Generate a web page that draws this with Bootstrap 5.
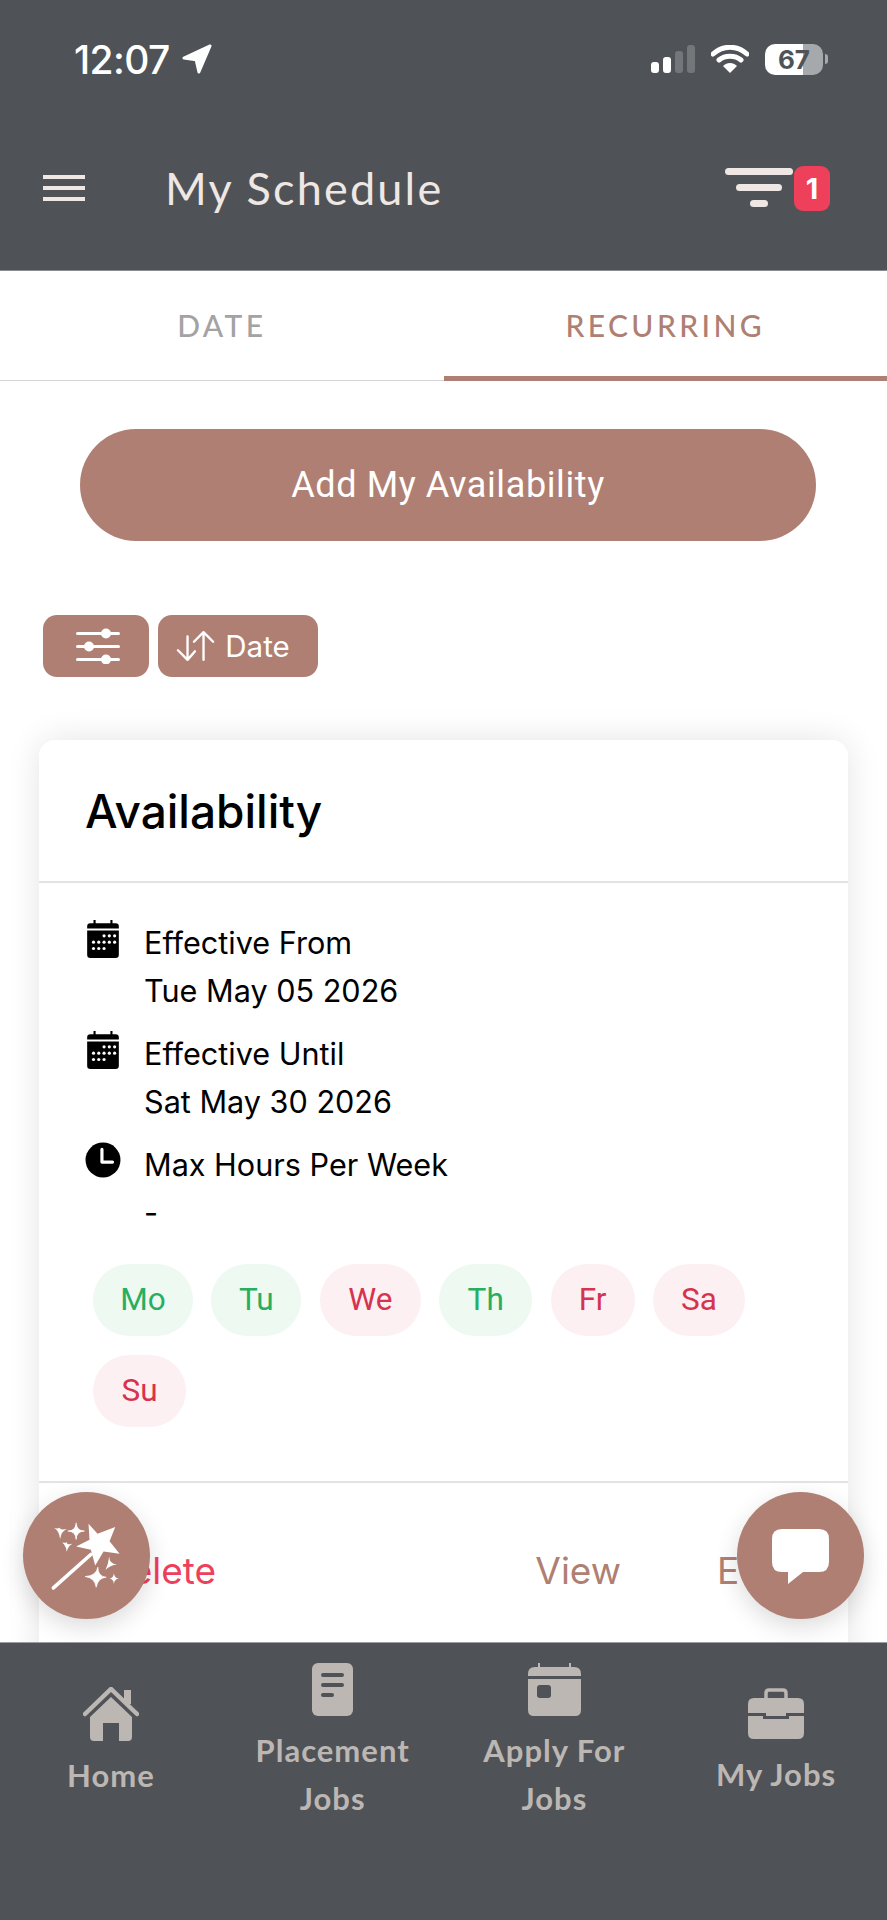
<!DOCTYPE html>
<html lang="en">
<head>
  <meta charset="UTF-8">
  <title>My Schedule</title>
  <meta name="viewport" content="width=device-width, initial-scale=1">
  <link href="https://cdn.jsdelivr.net/npm/bootstrap@5.3.3/dist/css/bootstrap.min.css" rel="stylesheet">
  <style>
    body { background: #fff; font-family: Inter, "Liberation Sans", sans-serif; }
    .app-screen { width: 887px; height: 1920px; position: relative; overflow: hidden; }
    .top-area { background: #4f5357; height: 271px; border-bottom: 1px solid #8a8d90; flex: none; }
    .status-row { height: 118px; padding: 0 59px 0 74px; color: #fff; }
    .status-time { font-size: 39px; font-weight: 500; letter-spacing: -.6px; line-height: 1; margin-right: 4px; }
    .batt-box { width: 58px; height: 31px; border-radius: 10px; overflow: hidden; background: linear-gradient(90deg, #fff 66%, #a5a9ab 66%); color: #4f5357; font: 700 26px/31px Inter, sans-serif; text-align: center; }
    .batt-nub { width: 3px; height: 10px; margin-left: 2px; border-radius: 0 3px 3px 0; background: #a5a9ab; }
    .app-row { height: 152px; padding: 0 57px 12px 43px; }
    .app-title { font-family: Lato, sans-serif; font-size: 45px; color: #efe7e3; margin-left: 80px; letter-spacing: 2.2px; line-height: 1; }
    .count-pill { width: 36px; height: 45px; border-radius: 9px; background: #ee3f5b; color: #fff; font: 700 29px/45px Inter, sans-serif; text-align: center; }
    .tab-row { height: 110px; border-bottom: 1px solid #d5d5d9; flex: none; }
    .tab-link { flex: 1; text-align: center; line-height: 108px; height: 110px; font-family: Lato, sans-serif; font-weight: 500; font-size: 30px; letter-spacing: 3.4px; color: #a3a3a3; }
    .tab-link.is-on { color: #b07f73; border-bottom: 5px solid #b07f73; }
    .main-area { flex: 1; min-height: 0; overflow: hidden; background: #fff; }
    .add-btn { display: block; width: 736px; height: 112px; margin: 48px auto 0 80px; border-radius: 56px; background: #b07f73; border: 0; color: #fff; font: 400 36px Roboto, sans-serif; letter-spacing: .6px; }
    .tool-row { margin: 74px 0 0 43px; gap: 9px; }
    .tool-btn { height: 62px; border-radius: 14px; background: #b07f73; border: 0; color: #fff; font: 400 29.5px Inter, sans-serif; padding: 0; }
    .sort-icon { margin-right: 10px; }
    .sort-text { margin-right: 11px; }
    .avail-card { margin: 63px 39px 0; border: 0; border-radius: 16px; box-shadow: 0 0 34px rgba(0,0,0,.11); height: 1000px; }
    .avail-head { height: 143px; background: #fff; border-bottom: 2px solid #e3e3e5; padding: 2px 46px 0; font-size: 46px; font-weight: 500; color: #000; }
    .avail-head:first-child { border-radius: 16px 16px 0 0; }
    .avail-body { height: 600px; flex: none; padding: 36px 46px 0; border-bottom: 2px solid #e3e3e5; }
    .info-line { font-size: 30.6px; line-height: 48px; color: #000; margin-bottom: 15px; }
    .info-line svg { flex: none; margin-top: 1px; margin-right: 23px; }
    .day-wrap { gap: 19px 18.4px; margin: 0 0 0 8px; padding-top: 12px; }
    .day-pill { height: 72px; border-radius: 36px; font: 400 31.5px/72px Roboto, sans-serif; text-align: center; }
    .day-yes { background: #edf9f1; color: #27ae60; }
    .day-no { background: #fcf0f3; color: #d6334f; }
    .avail-foot { padding: 65px 65px 0 65px; font: 400 37px/46px Inter, sans-serif; background: #fff; border: 0; color: #b07f73; }
    .del-link { color: #ee3f5b; }
    .fab-btn { position: absolute; width: 127px; height: 127px; top: 1492px; border-radius: 50%; background: #b07f73; box-shadow: 0 8px 24px rgba(0,0,0,.14); }
    .bottom-area { background: #4f5357; height: 278px; flex: none; border-top: 1px solid #9b9da0; padding: 0 0 78px; color: #bdb7b4; }
    .bottom-item { width: 25%; font-family: Lato, sans-serif; font-weight: 700; font-size: 31px; line-height: 48px; letter-spacing: 1px; text-align: center; }
    .bottom-item svg { display: block; margin: 0 auto 10px; }
  </style>
</head>
<body>

<div class="app-screen d-flex flex-column">

  <!-- header + status bar -->
  <div class="top-area">
    <div class="status-row d-flex align-items-center justify-content-between">
      <div class="d-flex align-items-center gap-2">
        <span class="status-time">12:07</span>
        <svg width="30" height="30" viewBox="0 0 32 32"><path d="M30 2 L2 15 L15 17 L18 30 Z" fill="#fff" stroke="#fff" stroke-width="3" stroke-linejoin="round"/></svg>
      </div>
      <div class="d-flex align-items-center">
        <svg width="44" height="28" viewBox="0 0 44 28" class="me-3">
          <rect x="0" y="17" width="8" height="11" rx="3" fill="#fff"/>
          <rect x="12" y="12" width="8" height="16" rx="3" fill="#fff"/>
          <rect x="24" y="6" width="8" height="22" rx="3" fill="#73777a"/>
          <rect x="36" y="0" width="8" height="28" rx="3" fill="#73777a"/>
        </svg>
        <svg width="38" height="28" viewBox="0 0 38 28" class="me-3">
          <path d="M2 9 C12 0 26 0 36 9 M8 15 C14 10 24 10 30 15" fill="none" stroke="#fff" stroke-width="5" stroke-linecap="round"/>
          <path d="M12 21 C16 17 22 17 26 21 L19 28 Z" fill="#fff"/>
        </svg>
        <div class="batt-box">67</div>
        <div class="batt-nub"></div>
      </div>
    </div>
    <div class="app-row d-flex align-items-center">
      <svg width="42" height="26" viewBox="0 0 42 26">
        <rect y="0" width="42" height="4" fill="#efe7e3"/><rect y="11" width="42" height="4" fill="#efe7e3"/><rect y="22" width="42" height="4" fill="#efe7e3"/>
      </svg>
      <span class="app-title">My Schedule</span>
      <div class="ms-auto d-flex align-items-center">
        <svg width="69" height="42" viewBox="0 0 69 42">
          <rect x="0" y="1" width="68" height="7" rx="3.5" fill="#efe7e3"/>
          <rect x="11" y="17" width="46" height="7" rx="3.5" fill="#efe7e3"/>
          <rect x="25" y="33" width="18" height="7" rx="3.5" fill="#efe7e3"/>
        </svg>
        <div class="count-pill">1</div>
      </div>
    </div>
  </div>

  <!-- tabs -->
  <div class="tab-row d-flex">
    <div class="tab-link">DATE</div>
    <div class="tab-link is-on">RECURRING</div>
  </div>

  <div class="main-area">
    <button type="button" class="btn add-btn">Add My Availability</button>

    <div class="tool-row d-flex">
      <button type="button" class="btn tool-btn d-flex align-items-center justify-content-center" style="width:106px">
        <svg width="44" height="36" viewBox="0 0 44 36" fill="#fff" class="ms-1">
          <rect y="4" width="44" height="3" rx="1.5"/><circle cx="30" cy="5.5" r="5"/>
          <rect y="17" width="44" height="3" rx="1.5"/><circle cx="13" cy="18.5" r="5"/>
          <rect y="30" width="44" height="3" rx="1.5"/><circle cx="30" cy="31.5" r="5"/>
        </svg>
      </button>
      <button type="button" class="btn tool-btn d-flex align-items-center justify-content-center" style="width:160px">
        <svg width="40" height="32" viewBox="0 0 36 30" fill="none" stroke="#fff" stroke-width="2.2" stroke-linecap="round" stroke-linejoin="round" class="sort-icon">
          <path d="M11 6 V28 M2 19 L11 28 L18 20"/><path d="M26 28 V2 M17 11 L26 2 L35 11"/>
        </svg>
        <span class="sort-text">Date</span>
      </button>
    </div>

    <div class="card avail-card">
      <div class="card-header avail-head d-flex align-items-center">Availability</div>
      <div class="avail-body">
        <div class="info-line d-flex">
          <svg width="36" height="38" viewBox="2 0 32 36"><path d="M3 6 Q3 3 6 3 H9 V0 H11 V3 H25 V0 H27 V3 H30 Q33 3 33 6 V8 H3 Z M3 10 H33 V33 Q33 36 30 36 H6 Q3 36 3 33 Z" fill="#000"/><g fill="#fff"><circle cx="19" cy="15" r="1.5"/><circle cx="24" cy="15" r="1.5"/><circle cx="29" cy="15" r="1.5"/><circle cx="9" cy="21" r="1.5"/><circle cx="14" cy="21" r="1.5"/><circle cx="19" cy="21" r="1.5"/><circle cx="24" cy="21" r="1.5"/><circle cx="29" cy="21" r="1.5"/><circle cx="9" cy="27" r="1.5"/><circle cx="14" cy="27" r="1.5"/><circle cx="19" cy="27" r="1.5"/></g></svg>
          <div>Effective From<br>Tue May 05 2026</div>
        </div>
        <div class="info-line d-flex">
          <svg width="36" height="38" viewBox="2 0 32 36"><path d="M3 6 Q3 3 6 3 H9 V0 H11 V3 H25 V0 H27 V3 H30 Q33 3 33 6 V8 H3 Z M3 10 H33 V33 Q33 36 30 36 H6 Q3 36 3 33 Z" fill="#000"/><g fill="#fff"><circle cx="19" cy="15" r="1.5"/><circle cx="24" cy="15" r="1.5"/><circle cx="29" cy="15" r="1.5"/><circle cx="9" cy="21" r="1.5"/><circle cx="14" cy="21" r="1.5"/><circle cx="19" cy="21" r="1.5"/><circle cx="24" cy="21" r="1.5"/><circle cx="29" cy="21" r="1.5"/><circle cx="9" cy="27" r="1.5"/><circle cx="14" cy="27" r="1.5"/><circle cx="19" cy="27" r="1.5"/></g></svg>
          <div>Effective Until<br>Sat May 30 2026</div>
        </div>
        <div class="info-line d-flex">
          <svg width="36" height="36" viewBox="1 1 34 34"><circle cx="18" cy="18" r="16.5" fill="#000"/><path d="M17 8 V20 H27" fill="none" stroke="#fff" stroke-width="3" stroke-linecap="round" stroke-linejoin="round"/></svg>
          <div>Max Hours Per Week<br>-</div>
        </div>
        <div class="day-wrap d-flex flex-wrap">
          <span class="day-pill day-yes" style="width:100px">Mo</span>
          <span class="day-pill day-yes" style="width:90px">Tu</span>
          <span class="day-pill day-no" style="width:101px">We</span>
          <span class="day-pill day-yes" style="width:93px">Th</span>
          <span class="day-pill day-no" style="width:84px">Fr</span>
          <span class="day-pill day-no" style="width:92px">Sa</span>
          <span class="day-pill day-no" style="width:93px">Su</span>
        </div>
      </div>
      <div class="card-footer avail-foot d-flex">
        <span class="del-link">Delete</span>
        <span class="ms-auto">View</span>
        <span style="margin-left:96px">Edit</span>
      </div>
    </div>
  </div>

  <!-- bottom tab bar -->
  <div class="bottom-area d-flex align-items-center">
    <div class="bottom-item">
      <svg width="56" height="54" viewBox="0 0 56 54" fill="#bdb7b4">
        <path d="M2 27 L28 2 L54 27" fill="none" stroke="#bdb7b4" stroke-width="4.5" stroke-linecap="round"/>
        <rect x="41" y="3" width="7" height="14"/>
        <path d="M28 10 L49 30 V50 Q49 54 45 54 H36 V36 H20 V54 H11 Q7 54 7 50 V30 Z"/>
      </svg>
      Home
    </div>
    <div class="bottom-item">
      <svg width="41" height="53" viewBox="0 0 41 53">
        <rect width="41" height="53" rx="6" fill="#bdb7b4"/>
        <rect x="9" y="10" width="23" height="4" rx="2" fill="#4f5357"/>
        <rect x="9" y="20" width="23" height="4" rx="2" fill="#4f5357"/>
        <rect x="9" y="30" width="13" height="4" rx="2" fill="#4f5357"/>
      </svg>
      Placement<br>Jobs
    </div>
    <div class="bottom-item">
      <svg width="53" height="53" viewBox="0 0 53 53">
        <path d="M10 0 H12 V4 H41 V0 H43 V4 H46 Q53 4 53 11 V13 H0 V11 Q0 4 7 4 H10 Z M0 16 H53 V47 Q53 53 47 53 H6 Q0 53 0 47 Z" fill="#bdb7b4"/>
        <rect x="9" y="22" width="14" height="13" rx="3" fill="#4f5357"/>
      </svg>
      Apply For<br>Jobs
    </div>
    <div class="bottom-item">
      <svg width="56" height="52" viewBox="0 0 56 50">
        <path d="M18 9 V4 Q18 1 21 1 H35 Q38 1 38 4 V9" fill="none" stroke="#bdb7b4" stroke-width="3.5"/>
        <path d="M6 9 H50 Q56 9 56 15 V24 H38 V27 H18 V24 H0 V15 Q0 9 6 9 Z M0 27 H15 V30 H41 V27 H56 V44 Q56 50 50 50 H6 Q0 50 0 44 Z" fill="#bdb7b4"/>
      </svg>
      My Jobs
    </div>
  </div>

  <!-- floating buttons -->
  <div class="fab-btn" style="left:23px">
    <svg width="127" height="127" viewBox="69 65 380 380" fill="#fff">
      <path d="M265 160 L292 190 L345 170 L328 212 L358 250 L310 243 L285 285 L272 238 L228 228 L268 208 Z"/>
      <path d="M272 252 L160 352" stroke="#fff" stroke-width="11" stroke-linecap="round"/>
      <path d="M228 157 Q228 182 253 182 Q228 182 228 207 Q228 182 203 182 Q228 182 228 157 Z" stroke="#fff" stroke-width="3"/>
      <path d="M178 172 Q180 180 200 176 Q184 182 180 206 Q178 182 162 172 Q172 176 178 172 Z"/>
      <path d="M200 215 Q200 224 217 220 Q204 226 200 244 Q198 226 186 216 Q194 218 200 215 Z"/>
      <path d="M293 290 Q293 318 318 320 Q293 322 288 350 Q284 322 255 318 Q288 316 293 290 Z" stroke="#fff" stroke-width="2"/>
      <path d="M327 258 Q327 280 350 282 Q330 284 316 298 Q324 282 327 258 Z"/>
      <path d="M341 308 Q342 322 356 324 Q342 326 341 340 Q340 326 328 324 Q340 322 341 308 Z"/>
    </svg>
  </div>
  <div class="fab-btn" style="left:737px">
    <svg width="127" height="127" viewBox="0 0 127 127">
      <path d="M45 37 H82 Q92 37 92 47 V70 Q92 80 82 80 H66 L51 92 V80 H45 Q35 80 35 70 V47 Q35 37 45 37 Z" fill="#fff"/>
    </svg>
  </div>

</div>

<script src="https://cdn.jsdelivr.net/npm/bootstrap@5.3.3/dist/js/bootstrap.bundle.min.js"></script>
</body>
</html>
